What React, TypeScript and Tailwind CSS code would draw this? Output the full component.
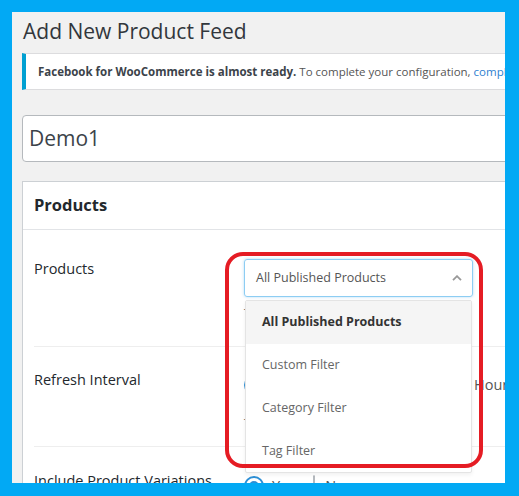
import React from "react";

function Radio({ checked }: { checked?: boolean }) {
  if (checked) {
    return (
      <span className="flex h-[20px] w-[20px] shrink-0 items-center justify-center rounded-full border-2 border-[#2d8fd5] bg-white">
        <span className="h-[10px] w-[10px] rounded-full bg-[#2d8fd5]" />
      </span>
    );
  }
  return <span className="h-[20px] w-[20px] shrink-0 rounded-full border border-[#b4b9be] bg-white" />;
}

export default function App() {
  return (
    <div className="h-[496px] w-[519px] bg-[#02a9f4] pb-[13px] pl-[12px] pr-[14px] pt-[12px] font-['Open_Sans',sans-serif]">
      <div className="relative h-full w-full overflow-hidden bg-[#f1f1f1]">
        <div className="w-[640px] pl-[10px] pt-[5px]">
          <h1 className="ml-[1px] h-[28px] text-[21px] font-normal leading-[28px] text-[#32373c]">
            Add New Product Feed
          </h1>
          <div className="mt-[8px] flex h-[37px] items-center whitespace-nowrap border-y border-l-4 border-y-[#dcdcde] border-l-[#00a0d2] bg-white pl-[12px] text-[11.5px] text-[#555]">
            <span className="font-bold text-[#3c434a]">Facebook for WooCommerce is almost ready.</span>
            <span>&nbsp;To complete your configuration,&nbsp;</span>
            <span className="text-[#2f7fd0]">complete the setup steps</span>
          </div>
          <div className="mt-[25px] flex h-[47px] items-center rounded-[4px] border border-[#b5b9bd] bg-white pl-[6px] text-[21px] text-[#3c434a]">
            Demo1
          </div>
          <div className="mt-[19px] h-[400px] border border-[#ccd0d4] bg-white">
            <div className="flex h-[48px] items-center border-b border-[#e2e4e7] px-[11px] text-[16.5px] font-bold text-[#23282d]">
              Products
            </div>
            <div className="mx-[11px]">
              <div className="flex h-[117px] border-b border-[#eeeeee] pt-[29px]">
                <div className="w-[210px] text-[14.5px] leading-[20px] text-[#23282d]">Products</div>
                <div className="relative">
                  <div className="flex h-[38px] w-[229px] items-center justify-between rounded-[3px] border border-[#8dcdf3] pl-[11px] pr-[10px] text-[12.5px] text-[#555] shadow-[0_0_3px_rgba(0,133,221,0.3)]">
                    <span>All Published Products</span>
                    <svg width="10" height="6" viewBox="0 0 10 6" fill="none">
                      <polyline points="1,5.2 5,1.2 9,5.2" stroke="#999" strokeWidth="1.8" />
                    </svg>
                  </div>
                  <div className="mt-[8px] text-[12px] text-[#777]">Type of products to include in the feed.</div>
                  <div className="absolute left-[1px] top-[41px] z-10 w-[227px] rounded-[2px] border border-[#e4e4e4] bg-white text-[12.5px] shadow-[0_2px_4px_rgba(0,0,0,0.06)]">
                    <div className="flex h-[43px] items-center bg-[#f5f5f5] pl-[16px] font-bold text-[#333]">
                      All Published Products
                    </div>
                    <div className="flex h-[43px] items-center pl-[16px] text-[#666]">Custom Filter</div>
                    <div className="flex h-[43px] items-center pl-[16px] text-[#666]">Category Filter</div>
                    <div className="flex h-[42px] items-center pl-[16px] text-[#666]">Tag Filter</div>
                  </div>
                </div>
              </div>
              <div className="flex h-[100px] border-b border-[#eeeeee] pt-[23px]">
                <div className="w-[210px] text-[14.5px] leading-[20px] text-[#23282d]">Refresh Interval</div>
                <div>
                  <div className="mt-[4px] flex items-center text-[14.5px] text-[#555]">
                    <div className="flex w-[206px] items-center">
                      <Radio checked />
                      <span className="ml-[8px]">Daily</span>
                    </div>
                    <Radio />
                    <span className="ml-[4px]">Hourly</span>
                  </div>
                  <div className="mt-[19px] text-[12px] text-[#777]">The feed will refresh automatically.</div>
                </div>
              </div>
              <div className="flex pt-[24px]">
                <div className="w-[210px] text-[14.5px] leading-[20px] text-[#23282d]">Include Product Variations</div>
                <div className="mt-[4px] flex items-center text-[14.5px] text-[#555]">
                  <Radio checked />
                  <span className="ml-[8px]">Yes</span>
                  <span className="ml-[18px]">
                    <Radio />
                  </span>
                  <span className="ml-[10px]">No</span>
                </div>
              </div>
            </div>
          </div>
        </div>
        <div className="pointer-events-none absolute left-[213px] top-[240px] z-20 h-[216px] w-[258px] rounded-[18px] border-4 border-[#e51c24]" />
      </div>
    </div>
  );
}
